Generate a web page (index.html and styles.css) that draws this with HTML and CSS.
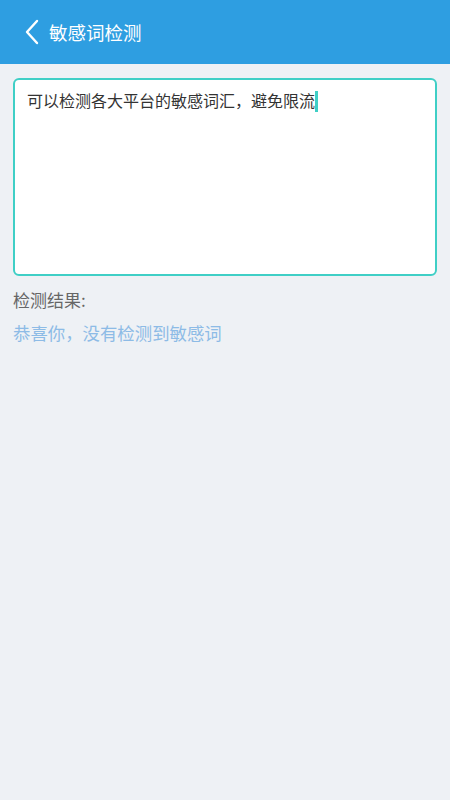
FILE: index.html
```html
<!DOCTYPE html>
<html lang="zh">
<head>
<meta charset="utf-8">
<link rel="stylesheet" href="styles.css">
</head>
<body>
<header class="bar">
  <svg class="back" width="16" height="26" viewBox="0 0 16 26"><path d="M13 2 L3 13 L13 24" fill="none" stroke="#fff" stroke-width="2.4" stroke-linecap="round" stroke-linejoin="round"/></svg>
  <span class="title">敏感词检测</span>
</header>
<main class="content">
  <div class="box"><span class="txt">可以检测各大平台的敏感词汇，避免限流</span><span class="cursor"></span></div>
  <div class="label">检测结果:</div>
  <div class="result">恭喜你，没有检测到敏感词</div>
</main>
</body>
</html>
```
FILE: styles.css
```css
html, body {
  margin: 0;
  padding: 0;
  background: #eef1f5;
  font-family: "Noto Sans CJK SC", "Noto Sans", sans-serif;
}
.bar {
  height: 64px;
  background: #2e9ee1;
  display: flex;
  align-items: center;
  padding-left: 24px;
  gap: 9px;
}
.back { display: block; }
.title {
  color: #fff;
  font-size: 18.5px;
  line-height: 24px;
}
.content {
  padding: 14px 13px;
}
.box {
  box-sizing: border-box;
  height: 198px;
  border: 2px solid #3fcfc6;
  border-radius: 6px;
  background: #fff;
  padding: 8px 12px;
  font-size: 16px;
  line-height: 24px;
  color: #333;
}
.cursor {
  display: inline-block;
  width: 2.5px;
  height: 21px;
  background: #3fcfc6;
  vertical-align: -5px;
}
.label {
  margin-top: 12px;
  font-size: 17px;
  line-height: 24px;
  color: #666;
}
.result {
  margin-top: 9px;
  font-size: 17.4px;
  line-height: 24px;
  color: #8dbbe6;
}
```
